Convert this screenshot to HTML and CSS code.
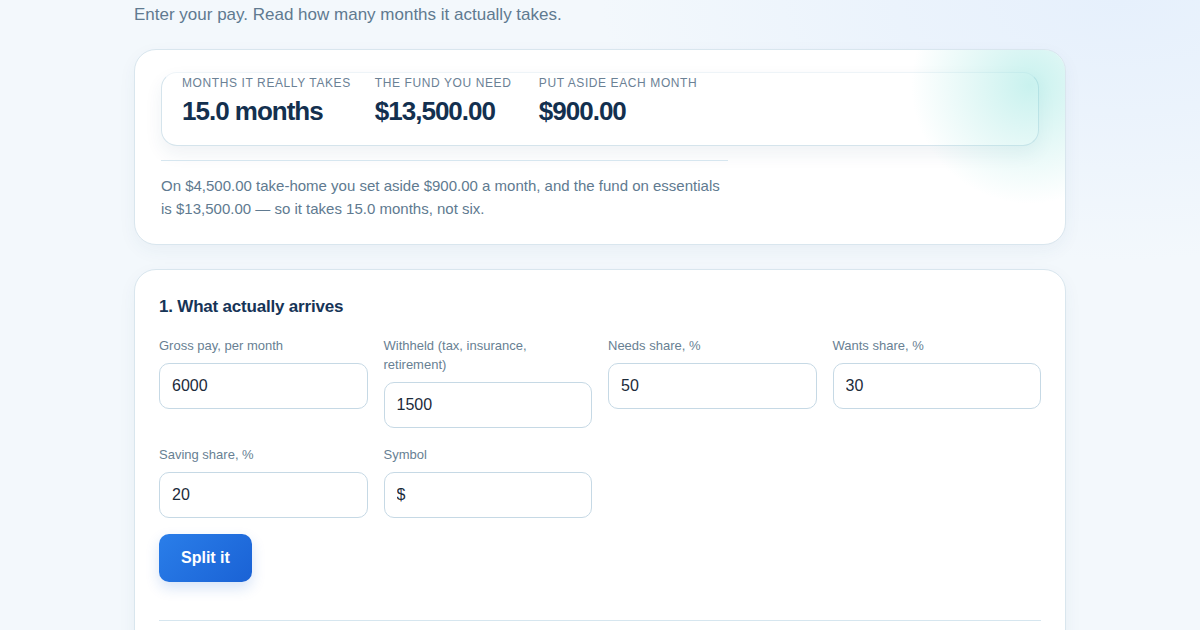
FILE: index.html
```html
<!DOCTYPE html>
<html lang="en">
<head>
<meta charset="utf-8">
<title>Emergency fund</title>
<link rel="stylesheet" href="styles.css">
</head>
<body>
<main class="page">
  <p class="intro">Enter your pay. Read how many months it actually takes.</p>

  <section class="card summary">
    <div class="stats">
      <div class="stat">
        <div class="stat-label">Months it really takes</div>
        <div class="stat-value">15.0 months</div>
      </div>
      <div class="stat">
        <div class="stat-label">The fund you need</div>
        <div class="stat-value">$13,500.00</div>
      </div>
      <div class="stat">
        <div class="stat-label">Put aside each month</div>
        <div class="stat-value">$900.00</div>
      </div>
    </div>
    <hr class="rule short">
    <p class="explain">On $4,500.00 take-home you set aside $900.00 a month, and the fund on essentials is $13,500.00 — so it takes 15.0 months, not six.</p>
  </section>

  <section class="card form-card">
    <h2 class="section-title">1. What actually arrives</h2>
    <div class="fields">
      <label class="field">
        <span class="field-label">Gross pay, per month</span>
        <input class="input" type="text" value="6000">
      </label>
      <label class="field">
        <span class="field-label">Withheld (tax, insurance, retirement)</span>
        <input class="input" type="text" value="1500">
      </label>
      <label class="field">
        <span class="field-label">Needs share, %</span>
        <input class="input" type="text" value="50">
      </label>
      <label class="field">
        <span class="field-label">Wants share, %</span>
        <input class="input" type="text" value="30">
      </label>
      <label class="field">
        <span class="field-label">Saving share, %</span>
        <input class="input" type="text" value="20">
      </label>
      <label class="field">
        <span class="field-label">Symbol</span>
        <input class="input" type="text" value="$">
      </label>
    </div>
    <button class="btn" type="button">Split it</button>
    <hr class="rule full">
  </section>
</main>
</body>
</html>
```

FILE: styles.css
```css
* { box-sizing: border-box; }

html, body {
  margin: 0;
  padding: 0;
}

body {
  font-family: "Liberation Sans", Arial, sans-serif;
  color: #163457;
  background:
    radial-gradient(ellipse 520px 260px at 1120px 0px, #e6f0fc 0%, rgba(230,240,252,0.6) 45%, rgba(243,248,252,0) 100%),
    #f3f8fc;
  min-height: 630px;
  overflow: hidden;
}

.page {
  width: 932px;
  margin: 0 auto;
  padding-top: 3px;
}

.intro {
  margin: 0 0 22px;
  font-size: 17px;
  line-height: 24px;
  color: #607a90;
}

.card {
  position: relative;
  background: #fff;
  border: 1px solid #d9e6ee;
  border-radius: 22px;
  box-shadow: 0 6px 18px rgba(30, 70, 110, 0.05);
}

.summary {
  padding: 22px 26px 24px;
  overflow: hidden;
  margin-bottom: 24px;
}

.summary::after {
  content: "";
  position: absolute;
  right: -85px;
  top: -85px;
  width: 240px;
  height: 240px;
  border-radius: 50%;
  background: radial-gradient(circle, rgba(120, 222, 214, 0.4) 0%, rgba(150, 228, 222, 0.25) 35%, rgba(200, 240, 238, 0) 70%);
  pointer-events: none;
}

.stats {
  display: flex;
  gap: 24px;
  padding: 3px 20px 19px;
  border: 1px solid #d5e4ec;
  border-top-color: #eef4f8;
  border-radius: 16px;
  background: #fff;
  box-shadow: 0 8px 18px rgba(30, 70, 110, 0.07);
}

.stat {
  min-width: 140px;
}

.stat-label {
  font-size: 12px;
  line-height: 15px;
  letter-spacing: 0.6px;
  text-transform: uppercase;
  color: #6b8195;
}

.stat-value {
  margin-top: 5px;
  font-size: 26px;
  line-height: 30px;
  font-weight: 700;
  letter-spacing: -1px;
  color: #13304f;
}

.rule {
  border: 0;
  height: 1px;
  background: #d6e6ef;
  margin: 0;
}

.rule.short {
  width: 567px;
  margin-top: 14px;
}

.explain {
  margin: 14px 0 0;
  max-width: 568px;
  font-size: 15px;
  line-height: 22.5px;
  color: #607a90;
}

.form-card {
  padding: 25px 24px 40px;
  min-height: 400px;
}

.section-title {
  margin: 0 0 17px;
  font-size: 17px;
  line-height: 24px;
  font-weight: 700;
  letter-spacing: -0.2px;
  color: #163457;
}

.fields {
  display: grid;
  grid-template-columns: repeat(4, 1fr);
  row-gap: 17px;
  column-gap: 16px;
  align-items: start;
}

.field {
  display: flex;
  flex-direction: column;
  gap: 8px;
}

.field-label {
  font-size: 13px;
  line-height: 19px;
  color: #687f93;
}

.input {
  width: 100%;
  height: 46px;
  padding: 0 12px;
  border: 1px solid #c6d9e5;
  border-radius: 10px;
  background: #fff;
  font-family: "Liberation Sans", Arial, sans-serif;
  font-size: 16px;
  color: #1c2b3a;
  outline: none;
}

.btn {
  display: block;
  margin-top: 16px;
  height: 48px;
  padding: 0 22px;
  border: 0;
  border-radius: 10px;
  background: linear-gradient(135deg, #2a7ee9 0%, #1a62d5 100%);
  color: #fff;
  font-family: "Liberation Sans", Arial, sans-serif;
  font-size: 16px;
  font-weight: 700;
  box-shadow: 0 6px 14px rgba(30, 100, 210, 0.18);
}

.rule.full {
  width: 100%;
  margin-top: 38px;
}
```
